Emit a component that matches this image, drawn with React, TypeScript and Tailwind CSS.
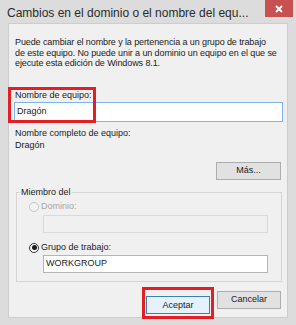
export default function App() {
  return (
    <div className="w-[296px] h-[325px] bg-[#dcdcdc] flex flex-col font-['Liberation_Sans',Arial,sans-serif] text-[#1a1a1a] overflow-hidden">
      {/* TITLE BAR */}
      <div className="h-[23px] flex items-start shrink-0">
        <span className="pl-[7px] pt-[5px] text-[12px] leading-[16px] text-[#2b2b2b] whitespace-nowrap">
          Cambios en el dominio o el nombre del equ...
        </span>
        <button className="ml-auto mr-[3px] w-[28px] h-[17px] bg-[#c75050] flex items-center justify-center">
          <svg width="8" height="8" viewBox="0 0 8 8">
            <path d="M1 1 L7 7 M7 1 L1 7" stroke="#fff" strokeWidth="1.8" />
          </svg>
        </button>
      </div>

      {/* PANEL */}
      <div className="relative mx-[8px] h-[295px] bg-[#f0f0f0] border border-[#cdcdcd] pt-[13px] flex flex-col">
        <p className="pl-[6px] text-[9px] leading-[10.5px] whitespace-nowrap tracking-[-0.1px]">
          Puede cambiar el nombre y la pertenencia a un grupo de trabajo<br />
          de este equipo. No puede unir a un dominio un equipo en el que se<br />
          ejecute esta edición de Windows 8.1.
        </p>

        <label className="mt-[21px] px-[6px] text-[9px] leading-[11px]">Nombre de equipo:</label>
        <div className="mt-[1.5px] ml-[5px] mr-[4px] h-[20px] bg-white border border-[#7eb4ea] flex items-center px-[2px] text-[9px]">
          Dragón
        </div>

        <div className="mt-[5.5px] px-[6px] text-[9px] leading-[11px]">Nombre completo de equipo:</div>
        <div className="mt-[1px] px-[6px] text-[9px] leading-[11px]">Dragón</div>

        <button className="mt-[11.5px] self-end mr-[6px] w-[65px] h-[18px] bg-[#e1e1e1] border border-[#adadad] text-[9px]">
          Más...
        </button>

        {/* MIEMBRO DEL */}
        <fieldset className="mt-[7px] ml-[7px] mr-[5px] border border-[#d5d5d5] pb-[8px] flex flex-col">
          <legend className="ml-[3px] px-[1px] text-[9px] leading-[11px]">Miembro del</legend>
          <div className="mt-[3px] pl-[12px] flex items-center gap-[2px] h-[11px] text-[9px] text-[#a6a6a6]">
            <span className="w-[10px] h-[10px] rounded-full border border-[#c6c6c6] bg-[#f4f4f4]" />
            Dominio:
          </div>
          <div className="mt-[2.5px] ml-[26px] w-[225px] h-[18px] border border-[#d9d9d9] bg-[#f0f0f0]" />
          <div className="mt-[9.5px] pl-[12px] flex items-center gap-[2px] h-[11px] text-[9px]">
            <span className="w-[10px] h-[10px] rounded-full border border-[#333] bg-white flex items-center justify-center">
              <span className="w-[5px] h-[5px] rounded-full bg-[#1a1a1a]" />
            </span>
            Grupo de trabajo:
          </div>
          <div className="mt-[1.5px] ml-[26px] w-[225px] h-[18px] border border-[#b5b5b5] bg-white flex items-center px-[2px] text-[9px]">
            WORKGROUP
          </div>
        </fieldset>

        {/* BUTTONS */}
        <div className="mt-[9px] mr-[6px] flex justify-end gap-[7px]">
          <div className="relative">
            <button className="w-[64px] h-[18px] bg-[#e5f1fb] border border-[#3c7fb1] text-[9px]">Aceptar</button>
            <div className="absolute -inset-[4px] border-[3px] border-[#e31e24] pointer-events-none" />
          </div>
          <button className="w-[64px] h-[18px] bg-[#e1e1e1] border border-[#adadad] text-[9px]">Cancelar</button>
        </div>

        {/* annotation box */}
        <div className="absolute left-[-1px] top-[63px] w-[88px] h-[36px] border-[3px] border-[#e31e24] pointer-events-none" />
      </div>
    </div>
  );
}
